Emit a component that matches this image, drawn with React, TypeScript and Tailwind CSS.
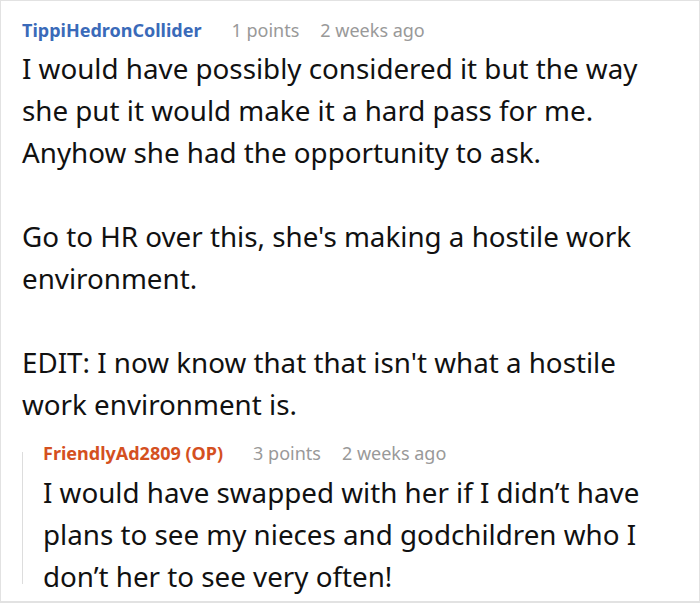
const font = { fontFamily: '"Noto Sans", "Open Sans", sans-serif' };

function Meta({ name, points, when, color }: { name: string; points: number; when: string; color: string }) {
  return (
    <div className="flex items-center text-[18px] leading-6">
      <span className={`font-bold ${color}`}>{name}</span>
      <span className="ml-[30px] text-[#999]">{points} points</span>
      <span className="ml-[21px] text-[#999]">{when}</span>
    </div>
  );
}

export default function App() {
  return (
    <div
      style={font}
      className="box-border h-[603px] w-[700px] overflow-hidden border border-b-2 border-[#e2e2e2] bg-white pl-[21px] pt-[17px] text-[#111]"
    >
      <Meta name="TippiHedronCollider" points={1} when="2 weeks ago" color="text-[#3a6ab9]" />
      <div className="mt-[5px] text-[27.75px] leading-[42px]">
        <p>
          I would have possibly considered it but the way
          <br />
          she put it would make it a hard pass for me.
          <br />
          Anyhow she had the opportunity to ask.
        </p>
        <p className="mt-[42px]">
          Go to HR over this, she's making a hostile work
          <br />
          environment.
        </p>
        <p className="mt-[42px]">
          EDIT: I now know that that isn't what a hostile
          <br />
          work environment is.
        </p>
      </div>
      <div className="mt-[16px] flex">
        <div className="mb-[13px] mt-[11px] w-px shrink-0 bg-[#ddd]" />
        <div className="pl-5">
          <Meta name="FriendlyAd2809 (OP)" points={3} when="2 weeks ago" color="text-[#d4501f]" />
          <p className="mt-[6px] text-[27.75px] leading-[42px]">
            I would have swapped with her if I didn’t have
            <br />
            plans to see my nieces and godchildren who I
            <br />
            don’t her to see very often!
          </p>
        </div>
      </div>
    </div>
  );
}
